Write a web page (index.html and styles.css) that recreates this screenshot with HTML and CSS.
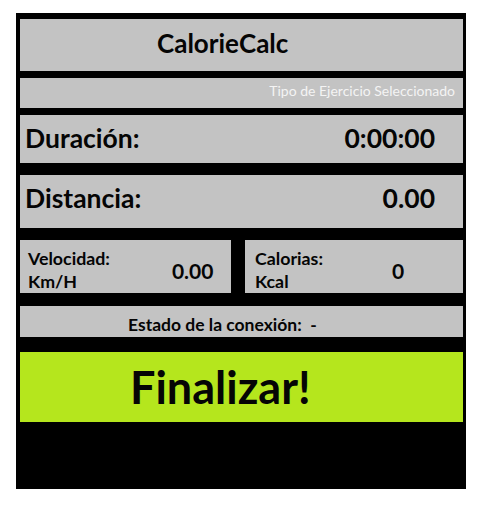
FILE: index.html
```html
<!DOCTYPE html>
<html lang="es">
<head>
<meta charset="utf-8">
<title>CalorieCalc</title>
<link rel="stylesheet" href="styles.css">
</head>
<body>
<div class="panel">
  <div class="row title"><span class="title-text">CalorieCalc</span></div>
  <div class="row type"><span class="type-text">Tipo de Ejercicio Seleccionado</span></div>
  <div class="row big duration"><span class="big-label">Duración:</span><span class="big-value">0:00:00</span></div>
  <div class="row big distance"><span class="big-label">Distancia:</span><span class="big-value">0.00</span></div>
  <div class="pair">
    <div class="cell left"><div class="cell-label">Velocidad:<br>Km/H</div><div class="cell-value v1">0.00</div></div>
    <div class="cell right"><div class="cell-label">Calorias:<br>Kcal</div><div class="cell-value v2">0</div></div>
  </div>
  <div class="row status"><span class="status-text">Estado de la conexión:&nbsp; -</span></div>
  <div class="finish"><span class="finish-text">Finalizar!</span></div>
</div>
</body>
</html>
```

FILE: styles.css
```css
html, body {
  margin: 0;
  padding: 0;
  background: #ffffff;
}
body {
  font-family: "Lato", "Open Sans", sans-serif;
  font-weight: 700;
  color: #050505;
}
.panel {
  box-sizing: border-box;
  margin: 13px 0 0 16px;
  width: 450px;
  height: 476px;
  background: #000;
  padding: 6px 3px 0 4px;
  display: flex;
  flex-direction: column;
}
.row {
  background: #c3c3c3;
  display: flex;
  align-items: center;
  box-sizing: border-box;
}
.title {
  height: 52px;
  margin-bottom: 7px;
  padding-left: 137px;
  padding-bottom: 5px;
}
.title-text {
  font-size: 26px;
}
.type {
  height: 30px;
  margin-bottom: 7px;
  justify-content: flex-end;
  padding-right: 8px;
  padding-bottom: 5px;
}
.type-text {
  font-weight: 400;
  font-size: 14px;
  color: #f4f4f4;
}
.big {
  justify-content: space-between;
  padding: 0 28px 0 5px;
}
.duration {
  height: 48px;
  margin-bottom: 12px;
  padding-bottom: 3px;
}
.distance {
  height: 53px;
  margin-bottom: 12px;
  padding-bottom: 8px;
}
.big-label, .big-value {
  font-size: 26.5px;
}
.pair {
  display: flex;
  gap: 14px;
  height: 53px;
  margin-bottom: 13px;
}
.cell {
  background: #c3c3c3;
  display: flex;
  align-items: center;
  box-sizing: border-box;
  padding-top: 6px;
}
.cell.left {
  width: 211px;
  padding-left: 8px;
}
.cell.right {
  flex: 1;
  padding-left: 10px;
}
.cell-label {
  font-size: 17.8px;
  line-height: 23px;
}
.cell-value {
  font-size: 21px;
  padding-top: 2px;
}
.v1 {
  margin-left: 62px;
}
.v2 {
  margin-left: 69px;
}
.status {
  height: 31px;
  margin-bottom: 15px;
  padding-left: 108px;
  padding-top: 5px;
}
.status-text {
  font-size: 17.5px;
}
.finish {
  background: #b5e61d;
  height: 70px;
  display: flex;
  align-items: center;
  padding-left: 110px;
}
.finish-text {
  font-size: 45px;
}
```
